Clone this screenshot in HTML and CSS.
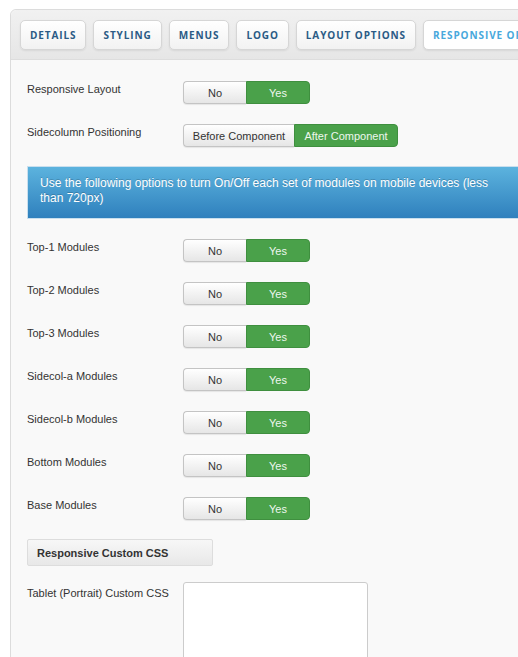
FILE: index.html
```html
<!DOCTYPE html>
<html>
<head>
<meta charset="utf-8">
<link rel="stylesheet" href="styles.css">
</head>
<body>
<div class="page">
  <div class="panel">
    <div class="tabbar">
      <span class="tab">Details</span>
      <span class="tab">Styling</span>
      <span class="tab">Menus</span>
      <span class="tab">Logo</span>
      <span class="tab">Layout Options</span>
      <span class="tab active">Responsive Options</span>
    </div>
    <div class="content">
      <div class="row">
        <div class="label">Responsive Layout</div>
        <div class="toggle"><span class="opt no">No</span><span class="opt yes">Yes</span></div>
      </div>
      <div class="row">
        <div class="label">Sidecolumn Positioning</div>
        <div class="toggle"><span class="opt wide-a">Before Component</span><span class="opt yes wide-b">After Component</span></div>
      </div>
      <div class="alert">Use the following options to turn On/Off each set of modules on mobile devices (less than 720px)</div>
      <div class="row">
        <div class="label">Top-1 Modules</div>
        <div class="toggle"><span class="opt no">No</span><span class="opt yes">Yes</span></div>
      </div>
      <div class="row">
        <div class="label">Top-2 Modules</div>
        <div class="toggle"><span class="opt no">No</span><span class="opt yes">Yes</span></div>
      </div>
      <div class="row">
        <div class="label">Top-3 Modules</div>
        <div class="toggle"><span class="opt no">No</span><span class="opt yes">Yes</span></div>
      </div>
      <div class="row">
        <div class="label">Sidecol-a Modules</div>
        <div class="toggle"><span class="opt no">No</span><span class="opt yes">Yes</span></div>
      </div>
      <div class="row">
        <div class="label">Sidecol-b Modules</div>
        <div class="toggle"><span class="opt no">No</span><span class="opt yes">Yes</span></div>
      </div>
      <div class="row">
        <div class="label">Bottom Modules</div>
        <div class="toggle"><span class="opt no">No</span><span class="opt yes">Yes</span></div>
      </div>
      <div class="row">
        <div class="label">Base Modules</div>
        <div class="toggle"><span class="opt no">No</span><span class="opt yes">Yes</span></div>
      </div>
      <div class="section">Responsive Custom CSS</div>
      <div class="row">
        <div class="label">Tablet (Portrait) Custom CSS</div>
        <div class="textarea"></div>
      </div>
    </div>
  </div>
</div>
</body>
</html>
```
FILE: styles.css
```css
html, body {
  margin: 0;
  padding: 0;
  background: #ffffff;
  overflow: hidden;
}
.page {
  width: 518px;
  height: 657px;
  overflow: hidden;
  padding: 9px 0 0 10px;
  box-sizing: border-box;
  font-family: "Liberation Sans", Arial, sans-serif;
  font-size: 11px;
  color: #333333;
}
.panel {
  width: 560px;
  border: 1px solid #dcdcdc;
  border-radius: 6px 6px 0 0;
  background: #f9f9f9;
  min-height: 700px;
}
.tabbar {
  display: flex;
  gap: 7px;
  padding: 10px 0 9px 9px;
  background: linear-gradient(#f1f1f1, #e6e6e6);
  border-bottom: 1px solid #dddddd;
  border-radius: 6px 6px 0 0;
  white-space: nowrap;
}
.tab {
  display: inline-flex;
  align-items: center;
  height: 28px;
  padding: 0 9px;
  border: 1px solid #d6d6d6;
  border-radius: 5px;
  background: linear-gradient(#ffffff, #f2f2f2);
  box-shadow: 0 1px 2px rgba(0,0,0,0.08);
  font-family: "Open Sans", sans-serif;
  font-weight: 700;
  font-size: 10px;
  letter-spacing: 0.9px;
  text-transform: uppercase;
  color: #2b5b85;
}
.tab.active {
  background: #ffffff;
  color: #48a8dc;
  flex-shrink: 0;
}
.content {
  padding: 21px 0 0 16px;
}
.row {
  display: flex;
  align-items: flex-start;
  margin-bottom: 20px;
}
.label {
  width: 156px;
  line-height: 16px;
  color: #333333;
}
.toggle {
  display: flex;
  height: 23px;
}
.opt {
  display: flex;
  align-items: center;
  justify-content: center;
  box-sizing: border-box;
  height: 23px;
  font-size: 11px;
}
.opt.no, .opt.wide-a {
  background: linear-gradient(#ffffff, #e6e6e6);
  border: 1px solid #c4c4c4;
  border-right: none;
  border-radius: 4px 0 0 4px;
  color: #333333;
  box-shadow: 0 1px 1px rgba(0,0,0,0.08);
}
.opt.yes {
  background: #4aa14a;
  border: 1px solid #3f8f3f;
  border-radius: 0 4px 4px 0;
  color: #eef7ee;
}
.opt.no { width: 63px; }
.opt.yes { width: 64px; }
.opt.wide-a { width: 111px; }
.opt.yes.wide-b { width: 104px; }
.alert {
  box-sizing: border-box;
  height: 53px;
  margin-bottom: 20px;
  margin-top: -1px;
  padding: 9px 20px 0 12px;
  border: 1px solid #c9dfee;
  background: linear-gradient(#5cb3de, #2f80bd);
  color: #ffffff;
  font-size: 12px;
  line-height: 15px;
  text-shadow: 0 -1px 0 rgba(0,0,0,0.2);
  width: 500px;
}
.section {
  box-sizing: border-box;
  width: 186px;
  height: 27px;
  margin-top: -1px;
  margin-bottom: 16px;
  padding-left: 9px;
  display: flex;
  align-items: center;
  border: 1px solid #dddddd;
  border-radius: 2px;
  background: linear-gradient(#f7f7f7, #e8e8e8);
  font-weight: 700;
  color: #333333;
}
.row .textarea {
  box-sizing: border-box;
  width: 185px;
  height: 120px;
  background: #ffffff;
  border: 1px solid #cccccc;
  border-radius: 3px;
}
.row:last-child .label {
  padding-top: 3px;
}
```
